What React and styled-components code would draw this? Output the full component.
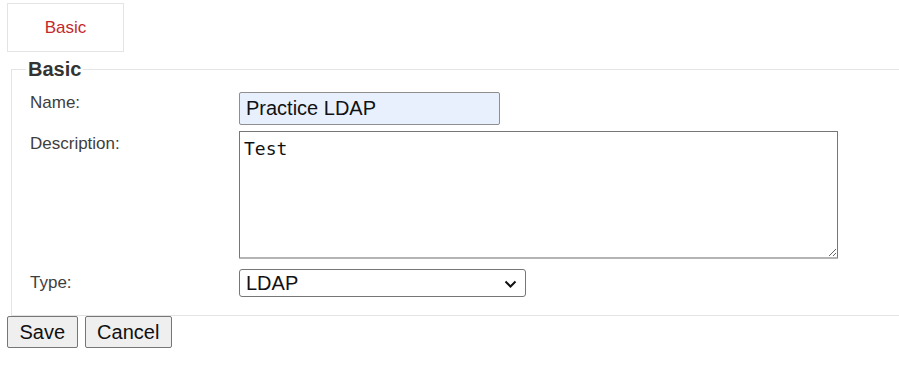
import React from "react";
import styled, { createGlobalStyle } from "styled-components";

const Global = createGlobalStyle`
  html, body { margin: 0; padding: 0; background: #fff; overflow-x: hidden; }
  body { font-family: "Liberation Sans", Arial, sans-serif; }
`;

const Page = styled.div`
  padding: 3px 0 0 7px;
`;

const Tab = styled.div`
  width: 115px;
  height: 47px;
  border: 1px solid #e4e4e4;
  display: flex;
  align-items: center;
  justify-content: center;
  color: #c4282d;
  font-size: 17px;
`;

const Fieldset = styled.fieldset`
  margin: 6px -60px 0 4px;
  padding: 0 0 18px 14px;
  border: 1px solid #e4e4e4;
  min-width: 0;
`;

const Legend = styled.legend`
  font-size: 20px;
  font-weight: bold;
  color: #333;
  padding: 0 2px;
  line-height: 23px;
`;

const Form = styled.div`
  display: flex;
  flex-direction: column;
  padding: 11px 0 0 4px;
`;

const Row = styled.div`
  display: grid;
  grid-template-columns: 209px auto;
  align-items: start;
  margin-top: ${(p) => p.$gap || 0}px;
`;

const Label = styled.label`
  font-size: 17px;
  line-height: 20px;
  color: #3e3e3e;
  padding-top: ${(p) => p.$offset || 0}px;
`;

const TextInput = styled.input`
  box-sizing: border-box;
  width: 261px;
  height: 33px;
  border: 1px solid #8f8f8f;
  border-radius: 2px;
  background: #e8f0fe;
  font-family: "Liberation Sans", Arial, sans-serif;
  font-size: 20px;
  color: #111;
  padding: 0 6px;
  margin: 0;
  outline: none;
`;

const TextArea = styled.textarea`
  box-sizing: border-box;
  width: 599px;
  height: 128px;
  border: 1px solid #767676;
  border-bottom: 2px solid #b4b4b4;
  border-radius: 1px;
  font-family: "DejaVu Sans Mono", Consolas, monospace;
  font-size: 18px;
  color: #111;
  padding: 6px 4px;
  margin: 0;
  display: block;
  outline: none;
`;

const SelectWrap = styled.div`
  position: relative;
  width: 287px;
  height: 28px;
`;

const Select = styled.select`
  appearance: none;
  box-sizing: border-box;
  width: 100%;
  height: 100%;
  border: 1px solid #767676;
  border-radius: 3px;
  background: #fff;
  font-family: "Liberation Sans", Arial, sans-serif;
  font-size: 20px;
  color: #111;
  padding: 0 3px 0 6px;
  margin: 0;
  outline: none;
`;

const Chevron = styled.svg`
  position: absolute;
  right: 9px;
  top: 11px;
  width: 13px;
  height: 8px;
  pointer-events: none;
`;

const Actions = styled.div`
  display: flex;
  gap: 7px;
  margin-top: 0;
`;

const Button = styled.button`
  box-sizing: border-box;
  height: 32px;
  padding: 0 11.5px;
  border: 1px solid #767676;
  border-radius: 2px;
  background: #efefef;
  font-family: "Liberation Sans", Arial, sans-serif;
  font-size: 20px;
  color: #111;
  margin: 0;
`;

export default function App() {
  return (
    <>
      <Global />
      <Page>
        <Tab>Basic</Tab>
        <Fieldset>
          <Legend>Basic</Legend>
          <Form>
            <Row>
              <Label $offset={1}>Name:</Label>
              <TextInput defaultValue="Practice LDAP" />
            </Row>
            <Row $gap={6}>
              <Label $offset={3}>Description:</Label>
              <TextArea defaultValue="Test" />
            </Row>
            <Row $gap={10}>
              <Label $offset={4}>Type:</Label>
              <SelectWrap>
                <Select defaultValue="LDAP">
                  <option value="LDAP">LDAP</option>
                  <option value="AD">Active Directory</option>
                </Select>
                <Chevron viewBox="0 0 13 8">
                  <path d="M1.5 1.5 L6.5 6.5 L11.5 1.5" fill="none" stroke="#111" strokeWidth="2" />
                </Chevron>
              </SelectWrap>
            </Row>
          </Form>
        </Fieldset>
        <Actions>
          <Button>Save</Button>
          <Button>Cancel</Button>
        </Actions>
      </Page>
    </>
  );
}
